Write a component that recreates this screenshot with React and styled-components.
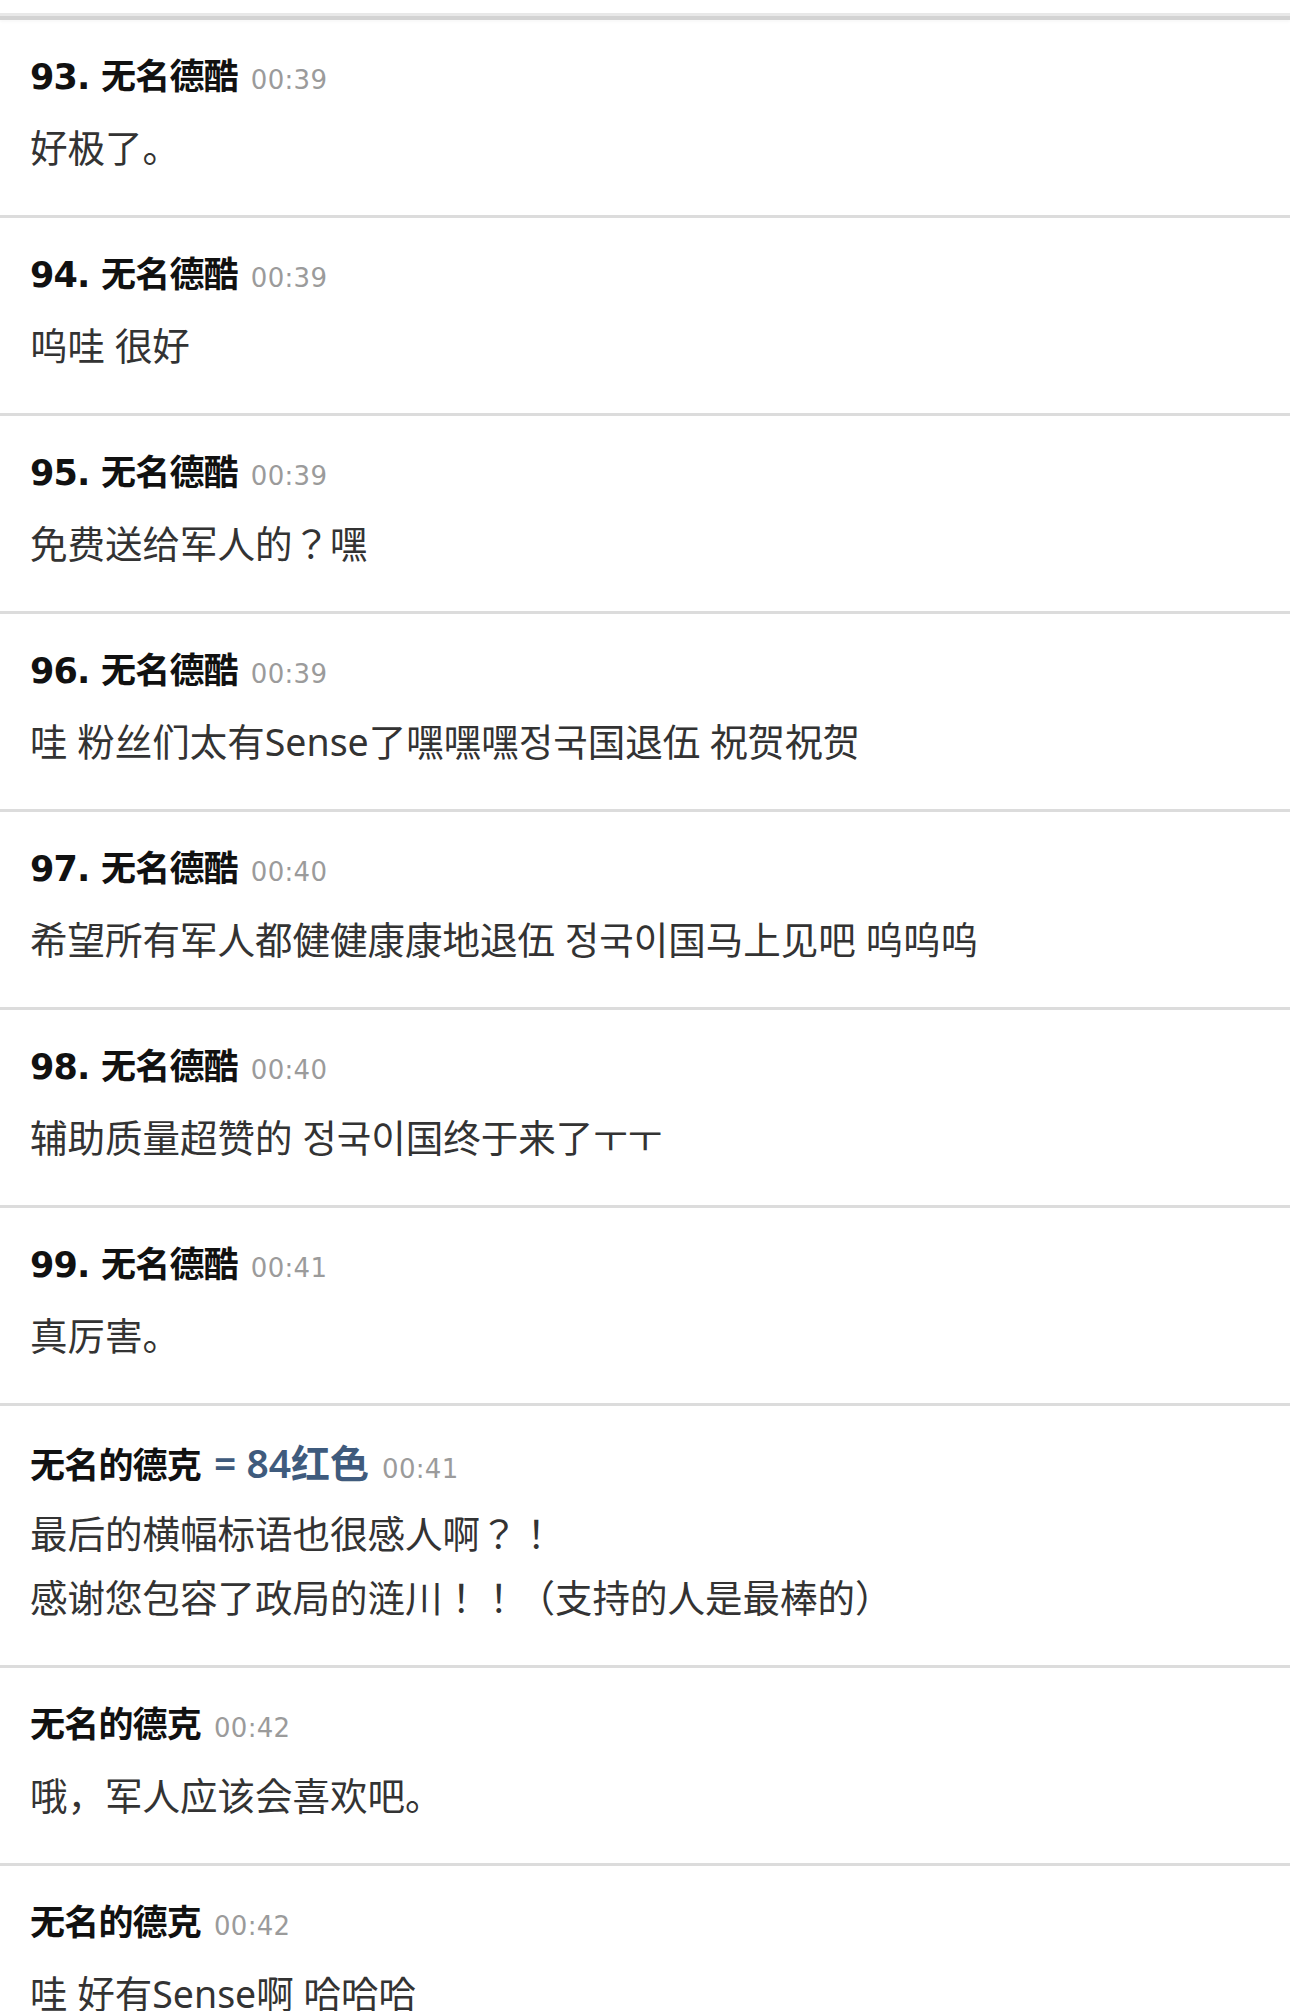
import React from "react";
import styled, { createGlobalStyle } from "styled-components";

const Global = createGlobalStyle`
  html, body {
    margin: 0;
    padding: 0;
    background: #ffffff;
  }
  body {
    font-family: "Noto Sans", "Noto Sans CJK JP", sans-serif;
    -webkit-font-smoothing: antialiased;
  }
`;

const Page = styled.div`
  display: flex;
  flex-direction: column;
  padding-top: 13px;
  background: #ffffff;
`;

const TopBar = styled.div`
  height: 7px;
  background: linear-gradient(#e8e8e8 0 3px, #d3d3d3 3px 7px);
  box-shadow: 0 2px 3px rgba(0, 0, 0, 0.03);
`;

const List = styled.div`
  display: flex;
  flex-direction: column;
`;

const Row = styled.div`
  padding: 32px 30px 35px 30px;
  border-bottom: ${(p) => (p.$last ? "none" : "3px solid #dcdcdc")};
  display: flex;
  flex-direction: column;
`;

const Header = styled.div`
  display: flex;
  align-items: baseline;
  height: 50px;
  line-height: 50px;
  white-space: nowrap;
`;

const Name = styled.span`
  font-family: "DejaVu Sans", "Noto Sans CJK SC", sans-serif;
  font-weight: 700;
  font-size: 35px;
  color: #111111;
  letter-spacing: -0.8px;
`;

const Badge = styled.span`
  font-family: "Noto Sans", "Noto Sans CJK SC", sans-serif;
  font-weight: 600;
  font-size: 39px;
  color: #3f5b7d;
  margin-left: 13px;
`;

const Time = styled.span`
  font-family: "DejaVu Sans", sans-serif;
  font-weight: 400;
  font-size: 26px;
  color: #9b9b9b;
  margin-left: 13px;
  letter-spacing: 0.3px;
`;

const Body = styled.div`
  margin-top: 14px;
  font-family: "Noto Sans", "Noto Sans CJK JP", sans-serif;
  font-size: 37.5px;
  line-height: 64px;
  color: #333333;
  white-space: nowrap;
`;

const Line = styled.div``;

const items = [
  { name: "93. 无名德酷", time: "00:39", lines: ["好极了。"] },
  { name: "94. 无名德酷", time: "00:39", lines: ["呜哇 很好"] },
  { name: "95. 无名德酷", time: "00:39", lines: ["免费送给军人的？嘿"] },
  {
    name: "96. 无名德酷",
    time: "00:39",
    lines: ["哇 粉丝们太有Sense了嘿嘿嘿정국国退伍 祝贺祝贺"],
  },
  {
    name: "97. 无名德酷",
    time: "00:40",
    lines: ["希望所有军人都健健康康地退伍 정국이国马上见吧 呜呜呜"],
  },
  {
    name: "98. 无名德酷",
    time: "00:40",
    lines: ["辅助质量超赞的 정국이国终于来了ㅜㅜ"],
  },
  { name: "99. 无名德酷", time: "00:41", lines: ["真厉害。"] },
  {
    name: "无名的德克",
    badge: "= 84红色",
    time: "00:41",
    lines: [
      "最后的横幅标语也很感人啊？！",
      "感谢您包容了政局的涟川！！（支持的人是最棒的）",
    ],
  },
  { name: "无名的德克", time: "00:42", lines: ["哦，军人应该会喜欢吧。"] },
  { name: "无名的德克", time: "00:42", lines: ["哇 好有Sense啊 哈哈哈"] },
];

export default function App() {
  return (
    <>
      <Global />
      <Page>
        <TopBar />
        <List>
          {items.map((it, i) => (
            <Row key={i} $last={i === items.length - 1}>
              <Header>
                <Name>{it.name}</Name>
                {it.badge && <Badge>{it.badge}</Badge>}
                <Time>{it.time}</Time>
              </Header>
              <Body>
                {it.lines.map((l, j) => (
                  <Line key={j}>{l}</Line>
                ))}
              </Body>
            </Row>
          ))}
        </List>
      </Page>
    </>
  );
}
